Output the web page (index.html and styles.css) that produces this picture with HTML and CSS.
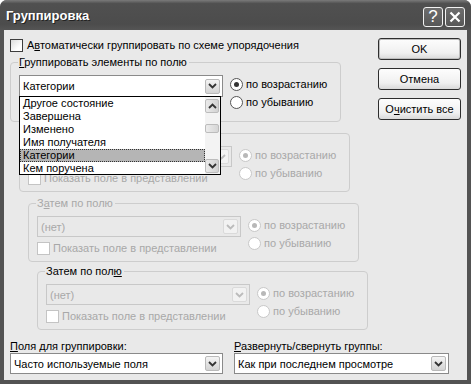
FILE: index.html
```html
<!DOCTYPE html>
<html lang="ru">
<head>
    <meta charset="UTF-8">
    <meta name="viewport" content="width=device-width, initial-scale=1.0">
    <link rel="stylesheet" href="styles.css">
    <title>Группировка</title>
</head>
<body>
    <div class="window">
        <div class="titlebar">
            <span class="title">Группировка</span>
            <div class="title-buttons">
                <span class="tbtn">?</span>
                <span class="tbtn">
                    <svg width="12" height="12" viewBox="0 0 12 12"><path d="M1.5 1.5 L10.5 10.5 M10.5 1.5 L1.5 10.5" stroke="#fff" stroke-width="2.2"/></svg>
                </span>
            </div>
        </div>

        <div class="body">
            <div class="main">
                <div class="left">
                    <div class="check auto">
                        <span class="box"></span>
                        <span>А<u>в</u>томатически группировать по схеме упорядочения</span>
                    </div>

                    <div class="group g1">
                        <span class="group-label"><u>Г</u>руппировать элементы по полю</span>
                        <div class="fields">
                            <div class="combo-wrap">
                                <div class="combo">
                                    <span class="value">Категории</span>
                                    <span class="arrow"><svg width="9" height="6" viewBox="0 0 9 6"><path d="M1 1 L4.5 4.5 L8 1" fill="none" stroke="#333" stroke-width="1.8"/></svg></span>
                                </div>
                                <div class="dropdown">
                                    <ul class="items">
                                        <li>Другое состояние</li>
                                        <li>Завершена</li>
                                        <li>Изменено</li>
                                        <li>Имя получателя</li>
                                        <li class="selected">Категории</li>
                                        <li>Кем поручена</li>
                                    </ul>
                                    <div class="scrollbar">
                                        <span class="sbtn"><svg width="9" height="6" viewBox="0 0 9 6"><path d="M1 5 L4.5 1.5 L8 5" fill="none" stroke="#333" stroke-width="1.8"/></svg></span>
                                        <span class="track top"></span>
                                        <span class="thumb"></span>
                                        <span class="track"></span>
                                        <span class="sbtn"><svg width="9" height="6" viewBox="0 0 9 6"><path d="M1 1 L4.5 4.5 L8 1" fill="none" stroke="#333" stroke-width="1.8"/></svg></span>
                                    </div>
                                </div>
                            </div>
                        </div>
                        <div class="radios">
                            <div class="radio"><span class="dot on"></span>по возрастанию</div>
                            <div class="radio"><span class="dot"></span>по убыванию</div>
                        </div>
                    </div>

                    <!-- label and value of this group sit under the open list -->
                    <div class="group g2 disabled">
                        <div class="fields">
                            <div class="combo">
                                <span class="value"></span>
                                <span class="arrow"><svg width="9" height="6" viewBox="0 0 9 6"><path d="M1 1 L4.5 4.5 L8 1" fill="none" stroke="#bbb" stroke-width="1.8"/></svg></span>
                            </div>
                            <div class="check">
                                <span class="box"></span>
                                <span>Показать поле в представлении</span>
                            </div>
                        </div>
                        <div class="radios">
                            <div class="radio"><span class="dot on"></span>по возрастанию</div>
                            <div class="radio"><span class="dot"></span>по убыванию</div>
                        </div>
                    </div>

                    <div class="group g3 disabled">
                        <span class="group-label">З<u>а</u>тем по полю</span>
                        <div class="fields">
                            <div class="combo">
                                <span class="value">(нет)</span>
                                <span class="arrow"><svg width="9" height="6" viewBox="0 0 9 6"><path d="M1 1 L4.5 4.5 L8 1" fill="none" stroke="#bbb" stroke-width="1.8"/></svg></span>
                            </div>
                            <div class="check">
                                <span class="box"></span>
                                <span>Показать поле в представлении</span>
                            </div>
                        </div>
                        <div class="radios">
                            <div class="radio"><span class="dot on"></span>по возрастанию</div>
                            <div class="radio"><span class="dot"></span>по убыванию</div>
                        </div>
                    </div>

                    <div class="group g4 disabled">
                        <span class="group-label active">Затем по пол<u>ю</u></span>
                        <div class="fields">
                            <div class="combo">
                                <span class="value">(нет)</span>
                                <span class="arrow"><svg width="9" height="6" viewBox="0 0 9 6"><path d="M1 1 L4.5 4.5 L8 1" fill="none" stroke="#bbb" stroke-width="1.8"/></svg></span>
                            </div>
                            <div class="check">
                                <span class="box"></span>
                                <span>Показать поле в представлении</span>
                            </div>
                        </div>
                        <div class="radios">
                            <div class="radio"><span class="dot on"></span>по возрастанию</div>
                            <div class="radio"><span class="dot"></span>по убыванию</div>
                        </div>
                    </div>
                </div>

                <div class="buttons">
                    <button class="default">OK</button>
                    <button>Отмена</button>
                    <button>О<u>ч</u>истить все</button>
                </div>
            </div>

            <div class="bottom">
                <div class="column narrow">
                    <span class="caption"><u>П</u>оля для группировки:</span>
                    <div class="combo">
                        <span class="value">Часто используемые поля</span>
                        <span class="arrow"><svg width="9" height="6" viewBox="0 0 9 6"><path d="M1 1 L4.5 4.5 L8 1" fill="none" stroke="#333" stroke-width="1.8"/></svg></span>
                    </div>
                </div>
                <div class="column">
                    <span class="caption"><u>Р</u>азвернуть/свернуть группы:</span>
                    <div class="combo">
                        <span class="value">Как при последнем просмотре</span>
                        <span class="arrow"><svg width="9" height="6" viewBox="0 0 9 6"><path d="M1 1 L4.5 4.5 L8 1" fill="none" stroke="#333" stroke-width="1.8"/></svg></span>
                    </div>
                </div>
            </div>
        </div>
    </div>
</body>
</html>
```

FILE: styles.css
```css
*{
    margin: 0;
    padding: 0;
    box-sizing: border-box;
}

body{
    width: 471px;
    height: 384px;
    overflow: hidden;
    font-family: 'Liberation Sans', 'DejaVu Sans', sans-serif;
    font-size: 11px;
    color: #000;
    background: #fff;
}

.window{
    width: 471px;
    height: 384px;
    background: #535353;
    border-radius: 7px 7px 0 0;
    display: flex;
    flex-direction: column;
}

.titlebar{
    height: 30px;
    display: flex;
    align-items: center;
    justify-content: space-between;
    padding: 0 6px 0 6px;
    background: linear-gradient(#7a7a7a, #505050 12%, #4c4c4c 80%, #555);
    border-radius: 7px 7px 0 0;
}
.title{
    color: #fff;
    font-weight: bold;
    font-size: 13px;
    text-shadow: 1px 1px 0 #222;
}
.title-buttons{
    display: flex;
    gap: 2px;
    margin-top: 3px;
}
.tbtn{
    width: 20px;
    height: 20px;
    border: 1px solid #f2f2f2;
    border-radius: 3px;
    background: linear-gradient(#6e6e6e, #575757);
    color: #fff;
    font-size: 17px;
    display: flex;
    align-items: center;
    justify-content: center;
}

.body{
    flex: 1;
    margin: 0 4px 4px;
    background: #e9e9e9;
    padding: 8px 6px 0;
}

.main{
    display: flex;
    justify-content: space-between;
}
.left{
    width: 357px;
}

.check{
    display: flex;
    align-items: center;
    height: 14px;
    gap: 4px;
}
.check .box{
    width: 13px;
    height: 13px;
    border: 1px solid #3d3d3d;
    background: linear-gradient(135deg, #dcdcdc, #fff 70%);
}
.disabled .check{
    color: #a8a8a8;
    gap: 3px;
}
.disabled .check .box{
    border-color: #c4c4c4;
    background: #fff;
}

.group{
    position: relative;
    width: 331px;
    height: 59px;
    margin-top: 11px;
    border: 1px solid #cdcdcd;
    border-radius: 4px;
    display: flex;
    padding: 12px 0 0 8px;
    gap: 7px;
}
.g1{
    margin-top: 10px;
    height: 60px;
    z-index: 2;
}
.g2{ margin-left: 9px; }
.g3{ margin-left: 18px; }
.g4{ margin-left: 27px; margin-top: 9px; }

.group-label{
    position: absolute;
    top: -8px;
    left: 7px;
    padding: 0 2px 0 1px;
    background: #e9e9e9;
    line-height: 14px;
}
.disabled .group-label{
    color: #a8a8a8;
}
.disabled .group-label.active{
    color: #000;
}

.fields{
    width: 204px;
    display: flex;
    flex-direction: column;
    gap: 4px;
}

.combo{
    height: 21px;
    border: 1px solid #8a8a8a;
    background: #fff;
    display: flex;
    align-items: center;
    justify-content: space-between;
    padding: 0 2px 0 3px;
}
.g1 .combo{
    height: 22px;
}
.combo .arrow{
    width: 15px;
    height: 15px;
    border: 1px solid #b9b9b9;
    border-radius: 2px;
    background: linear-gradient(#f4f4f4, #d3d3d3);
    display: flex;
    align-items: center;
    justify-content: center;
}
.disabled .combo{
    border-color: #c8c8c8;
    background: #e9e9e9;
    color: #a8a8a8;
}
.disabled .combo .arrow{
    border-color: #dadada;
    background: #f2f2f2;
}

.combo-wrap{
    position: relative;
}
.dropdown{
    position: absolute;
    top: 21px;
    left: 0;
    width: 202px;
    height: 79px;
    border: 1px solid #000;
    background: #fff;
    display: flex;
}
.items{
    list-style: none;
    flex: 1;
    overflow: hidden;
}
.items li{
    height: 13px;
    line-height: 13px;
    padding-left: 2px;
    border: 1px dotted transparent;
    display: flex;
    align-items: center;
}
.items li.selected{
    background: #b5b5b5;
    border-color: #333;
}
.scrollbar{
    width: 15px;
    display: flex;
    flex-direction: column;
    padding: 2px 1px 1px 0;
    background: #f3f3f3;
}
.sbtn{
    height: 14px;
    border: 1px solid #bcbcbc;
    border-radius: 2px;
    background: linear-gradient(90deg, #eaeaea, #d2d2d2);
    display: flex;
    align-items: center;
    justify-content: center;
}
.track{
    flex: 1;
}
.track.top{
    flex: none;
    height: 11px;
}
.thumb{
    height: 9px;
    border: 1px solid #bcbcbc;
    border-radius: 2px;
    background: linear-gradient(90deg, #ececec, #d6d6d6);
}

.radios{
    display: flex;
    flex-direction: column;
}
.radio{
    height: 18px;
    display: flex;
    align-items: center;
    gap: 3px;
}
.dot{
    width: 13px;
    height: 13px;
    border: 1px solid #555;
    border-radius: 50%;
    background: #fff;
    display: flex;
    align-items: center;
    justify-content: center;
}
.dot.on::after{
    content: "";
    width: 5px;
    height: 5px;
    border-radius: 50%;
    background: #333;
}
.disabled .radio{
    color: #a8a8a8;
}
.disabled .dot{
    border-color: #c8c8c8;
}
.disabled .dot.on::after{
    background: #b8b8b8;
}

.buttons{
    width: 83px;
    display: flex;
    flex-direction: column;
    gap: 8px;
}
.buttons button{
    height: 22px;
    font-family: inherit;
    font-size: 11px;
    color: #000;
    border: 1px solid #2e2e2e;
    border-radius: 3px;
    background: linear-gradient(#fdfdfd, #f0f0f0 70%, #d9d9d9);
}
.buttons button.default{
    box-shadow: inset 0 0 0 1px #bdbdbd;
}

.bottom{
    display: flex;
    gap: 11px;
    margin-top: 9px;
}
.column{
    width: 215px;
    display: flex;
    flex-direction: column;
}
.column.narrow{
    width: 213px;
}
.caption{
    line-height: 14px;
    height: 14px;
}
.bottom .combo{
    height: 21px;
}
```
